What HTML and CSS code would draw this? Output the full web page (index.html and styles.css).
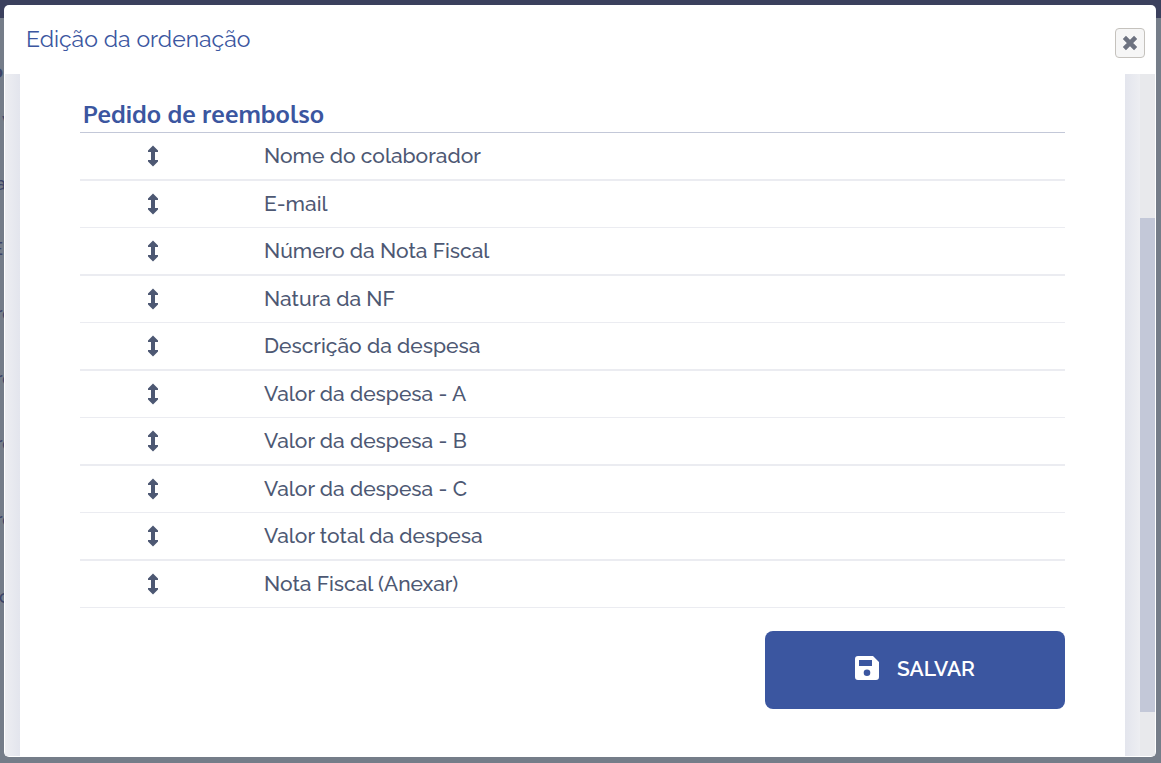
FILE: index.html
```html
<!DOCTYPE html>
<html lang="pt-BR">
<head>
    <meta charset="UTF-8">
    <meta name="viewport" content="width=device-width, initial-scale=1.0">
    <title>Edição da ordenação</title>
    <link rel="stylesheet" href="styles.css">
</head>
<body>
    <svg class="sprite" aria-hidden="true">
        <symbol id="icon-move" viewBox="0 0 10 22">
            <path d="M5 0.500 L10 5.500 V7 H7 V15 H10 V16.500 L5 21.500 L0 16.500 V15 H3 V7 H0 V5.500 Z"/>
        </symbol>
    </svg>

    <!-- Page behind the dialog -->
    <div class="page" aria-hidden="true">
        <div class="topbar"></div>
        <div class="page-labels">
            <span class="label-dot">o</span>
            <span class="label-v">v</span>
            <span class="label-a">a</span>
            <span class="label-box">E</span>
            <span>ro</span>
            <span>ro</span>
            <span>ro</span>
            <span class="label-last">ro</span>
            <span class="label-o">o</span>
        </div>
    </div>

    <div class="overlay">
        <div class="modal" role="dialog" aria-labelledby="modalTitle">
            <header class="modal-header">
                <h1 id="modalTitle">Edição da ordenação</h1>
                <button type="button" class="close" aria-label="Fechar">
                    <svg viewBox="0 0 16 16"><path d="M3 3 L13 13 M13 3 L3 13"/></svg>
                </button>
            </header>
            <div class="modal-body">
                <div class="gutter"></div>
                <form class="card" id="orderForm">
                    <h2>Pedido de reembolso</h2>
                    <table class="fields">
                        <tbody>
                            <tr><td class="handle"><svg><use href="#icon-move"/></svg></td><td>Nome do colaborador</td></tr>
                            <tr><td class="handle"><svg><use href="#icon-move"/></svg></td><td>E-mail</td></tr>
                            <tr><td class="handle"><svg><use href="#icon-move"/></svg></td><td>Número da Nota Fiscal</td></tr>
                            <tr><td class="handle"><svg><use href="#icon-move"/></svg></td><td>Natura da NF</td></tr>
                            <tr><td class="handle"><svg><use href="#icon-move"/></svg></td><td>Descrição da despesa</td></tr>
                            <tr><td class="handle"><svg><use href="#icon-move"/></svg></td><td>Valor da despesa - A</td></tr>
                            <tr><td class="handle"><svg><use href="#icon-move"/></svg></td><td>Valor da despesa - B</td></tr>
                            <tr><td class="handle"><svg><use href="#icon-move"/></svg></td><td>Valor da despesa - C</td></tr>
                            <tr><td class="handle"><svg><use href="#icon-move"/></svg></td><td>Valor total da despesa</td></tr>
                            <tr><td class="handle"><svg><use href="#icon-move"/></svg></td><td>Nota Fiscal (Anexar)</td></tr>
                        </tbody>
                    </table>
                    <button type="submit" class="save">
                        <svg viewBox="0 0 24 24">
                            <path fill-rule="evenodd" d="M3 0 H18 L24 6 V21 Q24 24 21 24 H3 Q0 24 0 21 V3 Q0 0 3 0 Z M4 4 V10 H17 V4 Z M12 13.500 A3.300 3.300 0 1 0 12 20.100 A3.300 3.300 0 1 0 12 13.500 Z"/>
                        </svg>
                        <span>SALVAR</span>
                    </button>
                </form>
                <div class="gutter gutter-right"></div>
                <div class="scrollbar"><div class="thumb"></div></div>
            </div>
        </div>
    </div>
</body>
</html>
```
FILE: styles.css
```css
* {
    margin: 0;
    padding: 0;
    box-sizing: border-box;
}

body {
    height: 100vh;
    overflow: hidden;
    background: #757d89;
    color: #4d5873;
    font-family: Raleway, Lato, sans-serif;
    font-size: 21px;
    font-weight: 500;
}

.sprite {
    display: none;
}

/* Page behind */
.page {
    height: 100%;
    overflow: hidden;
}

.topbar {
    height: 18px;
    background: #3b405d;
}

.page-labels {
    display: flex;
    flex-direction: column;
    width: 20px;
    padding-top: 42px;
    color: #3b4468;
    font-size: 18px;
    line-height: 24px;
}

.page-labels span {
    height: 65px;
    margin-left: -4px;
}

.page-labels .label-dot {
    height: 48px;
    margin-left: -8px;
    font-weight: bold;
}

.page-labels .label-v {
    height: 64px;
    margin-left: 2px;
}

.page-labels .label-box {
    margin-left: -8px;
}

.page-labels .label-o {
    margin-left: -1px;
}

.page-labels span:nth-child(7) {
    height: 76px;
}

.page-labels .label-last {
    height: 77px;
}

/* Dialog */
.overlay {
    position: absolute;
    inset: 0;
    display: flex;
    padding: 5px 5px 6px 4px;
}

.modal {
    display: flex;
    flex: 1;
    flex-direction: column;
    padding: 0 1px 1px;
    background: #fff;
    border-radius: 5px;
    overflow: hidden;
}

.modal-header {
    display: flex;
    justify-content: space-between;
    align-items: flex-start;
    height: 69px;
    padding: 23px 10px 0 21px;
}

h1 {
    color: #3b56a0;
    font-size: 23px;
    font-weight: normal;
    line-height: 22px;
}

.close {
    display: flex;
    align-items: center;
    justify-content: center;
    width: 30px;
    height: 30px;
    background: #f6f6f6;
    border: 1px solid #c5c2bd;
    border-radius: 4px;
    cursor: pointer;
}

.close svg {
    flex: none;
    width: 18px;
    height: 18px;
    fill: none;
    stroke: #6d7280;
    stroke-width: 4;
}

.modal-body {
    display: flex;
    flex: 1;
    min-height: 0;
}

.gutter {
    width: 15px;
    background: linear-gradient(to right, #edeef2, #e3e5ed);
}

.gutter-right {
    background: linear-gradient(to left, #edeef2, #e3e5ed);
}

.scrollbar {
    width: 15px;
    padding: 144px 0 44px;
    background: #e8e9ec;
}

.thumb {
    height: 100%;
    background: #c3c8d8;
}

.card {
    display: flex;
    flex: 1;
    flex-direction: column;
    padding: 22px 60px 0;
}

h2 {
    height: 37px;
    padding-left: 3px;
    border-bottom: 1px solid #c3c8d8;
    color: #3b56a0;
    font-family: Oxygen, "Noto Sans", sans-serif;
    font-size: 24px;
    font-weight: 600;
    line-height: 36px;
}

.fields {
    width: 100%;
    border-collapse: separate;
    border-spacing: 0;
}

.fields td {
    height: 47px;
    padding-left: 38px;
    border-bottom: 1px solid #ebecf1;
    line-height: 24px;
}

.fields tr:nth-child(odd) td {
    height: 48px;
    border-bottom-width: 2px;
}

.fields .handle {
    width: 146px;
    padding-left: 0;
    text-align: center;
}

.handle svg {
    display: block;
    width: 10px;
    height: 22px;
    margin: 0 auto;
    fill: #4d5873;
}

.save {
    display: flex;
    align-items: center;
    align-self: flex-end;
    justify-content: center;
    gap: 18px;
    width: 300px;
    height: 78px;
    margin-top: 23px;
    padding-bottom: 4px;
    background: #3b56a0;
    border: none;
    border-radius: 8px;
    color: #fff;
    font-family: inherit;
    font-size: 21px;
    font-weight: 600;
    cursor: pointer;
}

.save svg {
    width: 24px;
    height: 24px;
    fill: #fff;
}
```
